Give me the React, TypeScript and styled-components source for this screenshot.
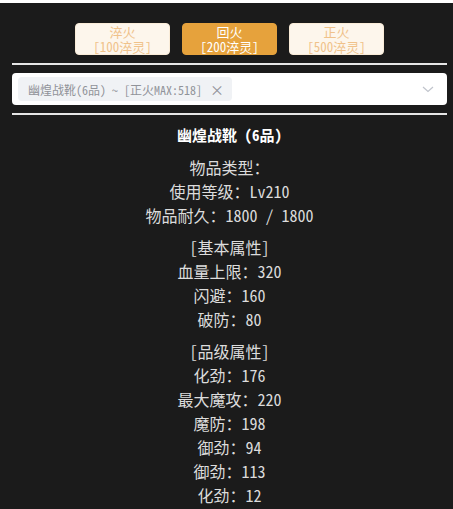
import React from "react";
import styled, { createGlobalStyle } from "styled-components";

const Global = createGlobalStyle`
  html, body { margin: 0; padding: 0; background: #ffffff; }
  body { font-family: "Noto Sans CJK SC", "Liberation Sans", sans-serif; }
`;

const Panel = styled.div`
  margin-top: 3px;
  background: #1b1b1b;
  min-height: 506px;
  padding: 20px 6px 0 12px;
  box-sizing: border-box;
`;

const ButtonRow = styled.div`
  display: flex;
  justify-content: center;
  gap: 12px;
`;

const FireButton = styled.button<{ $active?: boolean }>`
  width: 95px;
  height: 32px;
  box-sizing: border-box;
  padding: 0;
  border-radius: 4px;
  border: 1px solid ${(p) => (p.$active ? "#e6a23c" : "#faecd8")};
  background: ${(p) => (p.$active ? "#e6a23c" : "#fdf6ec")};
  color: ${(p) => (p.$active ? "#ffffff" : "#f0c28a")};
  font-family: "Noto Sans CJK SC", sans-serif;
  font-feature-settings: "hwid";
  font-size: 13px;
  line-height: 15px;
  display: flex;
  flex-direction: column;
  align-items: center;
  justify-content: center;
`;

const Divider = styled.div`
  height: 2px;
  background: #e6e6e6;
  margin: 8px 0;
`;

const Select = styled.div`
  height: 32px;
  background: #ffffff;
  border-radius: 4px;
  display: flex;
  align-items: center;
  padding: 0 12px 0 6px;
  box-sizing: border-box;
`;

const Tag = styled.span`
  height: 24px;
  display: inline-flex;
  align-items: center;
  gap: 8px;
  padding: 0 8px 0 10px;
  background: #f0f2f5;
  border-radius: 4px;
  color: #909399;
  font-size: 12px;
  font-feature-settings: "hwid";
  white-space: pre;
`;

const Close = styled.span`
  font-size: 14px;
  color: #909399;
  font-feature-settings: normal;
`;

const Arrow = styled.svg`
  margin-left: auto;
  width: 14px;
  height: 14px;
`;

const Info = styled.div`
  display: flex;
  flex-direction: column;
  align-items: center;
  color: #dcdcdc;
  font-size: 16px;
  line-height: 24px;
  font-feature-settings: "hwid";
  white-space: pre;
`;

const Group = styled.div`
  display: flex;
  flex-direction: column;
  align-items: center;
  & + & {
    margin-top: 8px;
  }
`;

const Title = styled.div`
  font-weight: bold;
  color: #ffffff;
  font-size: 15px;
`;

const Line = styled.div``;

const groups: string[][] = [
  ["物品类型：", "使用等级：Lv210", "物品耐久：1800 / 1800"],
  ["[基本属性]", "血量上限：320", "闪避：160", "破防：80"],
  ["[品级属性]", "化劲：176", "最大魔攻：220", "魔防：198", "御劲：94", "御劲：113", "化劲：12"],
];

export default function App() {
  return (
    <>
      <Global />
      <Panel>
        <ButtonRow>
          <FireButton>
            <span>淬火</span>
            <span>[100淬灵]</span>
          </FireButton>
          <FireButton $active>
            <span>回火</span>
            <span>[200淬灵]</span>
          </FireButton>
          <FireButton>
            <span>正火</span>
            <span>[500淬灵]</span>
          </FireButton>
        </ButtonRow>
        <Divider />
        <Select>
          <Tag>
            <span>幽煌战靴(6品) ~ [正火MAX:518]</span>
            <Close>×</Close>
          </Tag>
          <Arrow viewBox="0 0 14 14">
            <path d="M2 5 L7 9.5 L12 5" fill="none" stroke="#c0c4cc" strokeWidth="1.2" />
          </Arrow>
        </Select>
        <Divider />
        <Info>
          <Group>
            <Title>幽煌战靴 (6品)</Title>
          </Group>
          {groups.map((g, i) => (
            <Group key={i}>
              {g.map((t, j) => (
                <Line key={j}>{t}</Line>
              ))}
            </Group>
          ))}
        </Info>
      </Panel>
    </>
  );
}
